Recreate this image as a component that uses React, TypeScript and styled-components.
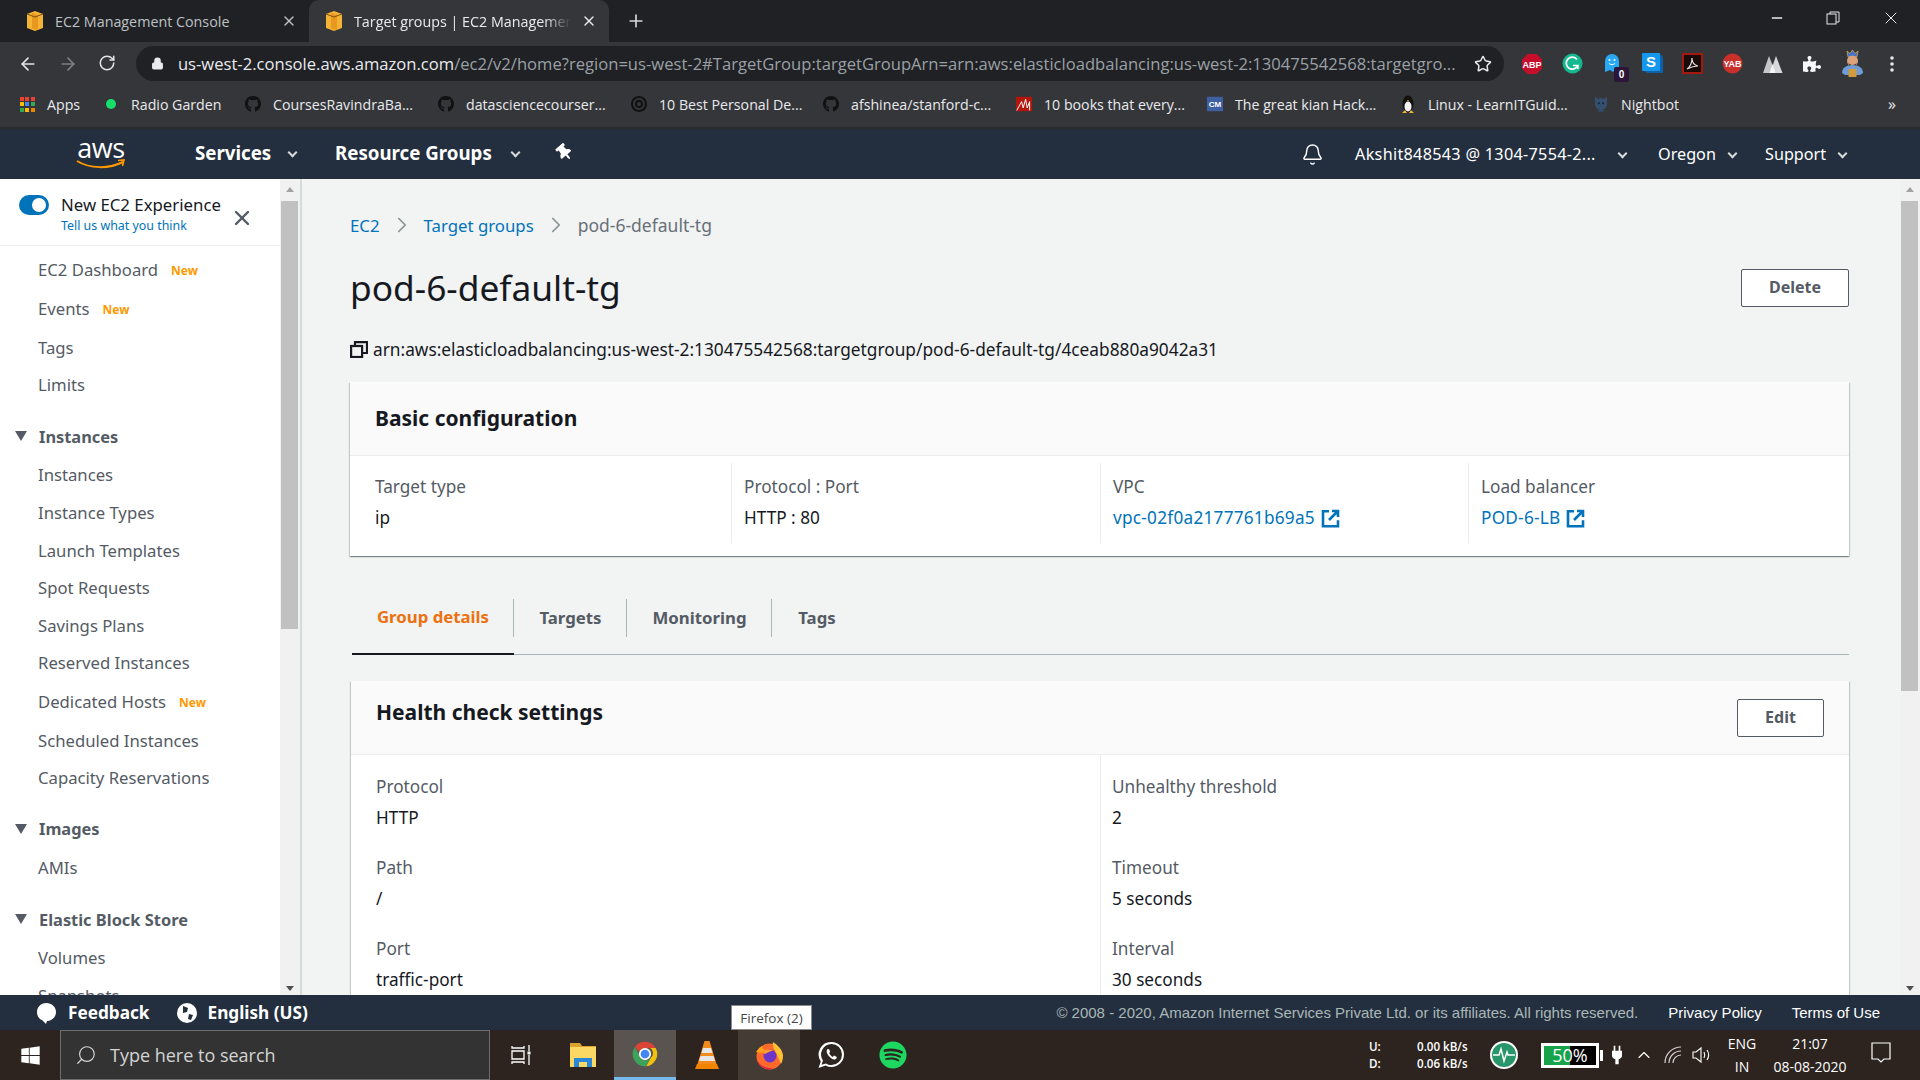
import React from 'react';
import styled, { createGlobalStyle } from 'styled-components';
import { ArrowLeft, ArrowRight, RotateCw, Lock, Star, Bell, X, Plus, Minus, Search, ChevronRight, ChevronUp } from 'lucide-react';
import { FaGithub, FaPuzzlePiece, FaSpotify, FaThumbtack, FaWindows, FaBullseye } from 'react-icons/fa';

const Global = createGlobalStyle`
  html, body { margin: 0; padding: 0; background: #202124; }
  * { box-sizing: border-box; }
`;

const Page = styled.div`
  width: 1920px;
  height: 1080px;
  display: flex;
  flex-direction: column;
  overflow: hidden;
  position: relative;
  font-family: "Noto Sans", "Open Sans", sans-serif;
  color: #16191f;
`;

/* ---- browser chrome ---- */
const TabStrip = styled.div`
  height: 42px;
  background: #202124;
  display: flex;
  align-items: flex-end;
  font-family: "Open Sans", sans-serif;
  font-size: 14.3px;
`;
const Tab = styled.div<{ $active?: boolean; $w: number }>`
  width: ${p => p.$w}px;
  height: 42px;
  padding: 0 12px 0 25px;
  display: flex;
  align-items: center;
  gap: 10px;
  border-radius: 10px 10px 0 0;
  background: ${p => (p.$active ? '#35363a' : 'transparent')};
  color: ${p => (p.$active ? '#e8eaed' : '#bdc1c6')};
`;
const TabActivePad = styled(Tab)`
  padding-left: 15px;
`;
const TabTitle = styled.span<{ $fade?: boolean }>`
  flex: 1;
  overflow: hidden;
  white-space: nowrap;
  ${p => (p.$fade ? 'mask-image: linear-gradient(90deg, #000 88%, transparent 100%);' : '')}
`;
const NewTab = styled.div`
  margin-left: 17px;
  height: 42px;
  display: flex;
  align-items: center;
  color: #d5d7da;
`;
const WindowControls = styled.div`
  margin-left: auto;
  height: 42px;
  display: flex;
  align-items: center;
  gap: 41px;
  padding: 0 19px 6px 0;
  color: #e8eaed;
`;
const Toolbar = styled.div`
  height: 43px;
  background: #35363a;
  display: flex;
  align-items: center;
  padding: 0 8px 0 18px;
`;
const NavButtons = styled.div`
  width: 118px;
  display: flex;
  gap: 20px;
  color: #e3e5e8;
`;
const Omnibox = styled.div`
  width: 1369px;
  height: 35px;
  border-radius: 18px;
  background: #202124;
  display: flex;
  align-items: center;
  padding: 0 12px 0 15px;
  font-family: "Open Sans", sans-serif;
  font-size: 16.6px;
  color: #9aa0a6;
  gap: 14px;
`;
const Url = styled.div`
  flex: 1;
  white-space: nowrap;
  overflow: hidden;
  b { font-weight: 400; color: #e8eaed; }
`;
const Extensions = styled.div`
  flex: 1;
  display: flex;
  align-items: center;
  padding-left: 8px;
`;
const Ext = styled.div`
  width: 40px;
  height: 30px;
  display: flex;
  align-items: center;
  justify-content: center;
  position: relative;
`;
const ExtBadge = styled.span`
  position: absolute;
  right: 3px;
  bottom: -3px;
  width: 15px;
  height: 15px;
  border-radius: 2px;
  background: #2c1538;
  color: #fff;
  font: bold 10px/15px "Liberation Sans", sans-serif;
  text-align: center;
`;
const Bookmarks = styled.div`
  height: 42px;
  background: #35363a;
  padding-bottom: 4px;
  display: flex;
  align-items: center;
  font-family: "Open Sans", sans-serif;
  font-size: 14.2px;
  color: #e8eaed;
  position: relative;
`;
const Bookmark = styled.div<{ $w: number }>`
  width: ${p => p.$w}px;
  display: flex;
  align-items: center;
  gap: 12px;
  white-space: nowrap;
`;
const BookmarkIcon = styled.span`
  width: 16px;
  height: 18px;
  display: flex;
  align-items: center;
  justify-content: center;
  flex: none;
`;
const MoreMarks = styled.span`
  margin-left: auto;
  margin-right: 24px;
  font-size: 16px;
`;
const AppsGrid = styled.span`
  width: 15px;
  height: 15px;
  display: grid;
  grid-template-columns: repeat(3, 4px);
  grid-auto-rows: 4px;
  gap: 1.500px;
`;
const AppsDot = styled.i<{ $c: string }>`
  background: ${p => p.$c};
`;
const GreenDot = styled.span`
  width: 10px;
  height: 10px;
  border-radius: 50%;
  background: #16e06a;
`;
const ChromeEdge = styled.div`
  height: 2px;
  background: #2a2b2e;
`;

/* ---- aws console nav ---- */
const ConsoleNav = styled.div`
  height: 50px;
  background: #232f3e;
  display: flex;
  align-items: center;
  color: #fff;
  font-family: "Noto Sans", sans-serif;
`;
const Logo = styled.div`
  width: 50px;
  margin-left: 76px;
  height: 34px;
  display: flex;
  flex-direction: column;
  align-items: center;
  position: relative;
  font: 400 27px/22px "Open Sans", sans-serif;
  letter-spacing: -0.4px;
  svg { position: absolute; left: 0; bottom: 1px; }
`;
const NavMain = styled.div<{ $ml: number; $w: number }>`
  margin-left: ${p => p.$ml}px;
  width: ${p => p.$w}px;
  height: 26px;
  margin-top: -3px;
  font-size: 18.7px;
  font-weight: 700;
  display: flex;
  align-items: center;
  justify-content: space-between;
  white-space: nowrap;
`;
const PinIcon = styled(FaThumbtack)`
  transform: rotate(-40deg);
`;
const Caret = styled.i`
  display: inline-block;
  width: 8px;
  height: 8px;
  position: relative;
  flex: none;
  &::before {
    content: '';
    position: absolute;
    left: 1px;
    top: 0;
    width: 5px;
    height: 5px;
    border-right: 2px solid #d5dbdb;
    border-bottom: 2px solid #d5dbdb;
    transform: rotate(45deg);
  }
`;
const NavRight = styled.div`
  margin-left: auto;
  display: flex;
  align-items: center;
  font-size: 16.2px;
  padding-right: 74px;
`;
const NavItem = styled.div<{ $w: number; $ml: number }>`
  width: ${p => p.$w}px;
  margin-left: ${p => p.$ml}px;
  display: flex;
  align-items: center;
  justify-content: space-between;
  white-space: nowrap;
`;
const NavUser = styled(NavItem)`
  letter-spacing: 0.3px;
`;

/* ---- page body ---- */
const Main = styled.div`
  flex: 1;
  min-height: 0;
  display: flex;
  background: #f2f3f3;
`;
const Sidebar = styled.aside`
  width: 280px;
  background: #fff;
  overflow: hidden;
  flex: none;
`;
const Experience = styled.div`
  height: 67px;
  border-bottom: 1px solid #eaeded;
  display: flex;
  padding: 15px 0 0 19px;
`;
const Toggle = styled.div`
  width: 30px;
  height: 20px;
  border-radius: 10px;
  background: #0073bb;
  flex: none;
  margin-top: 1px;
  display: flex;
  justify-content: flex-end;
  padding: 3px;
  &::after {
    content: '';
    width: 14px;
    height: 14px;
    border-radius: 50%;
    background: #fff;
  }
`;
const ExpText = styled.div`
  margin-left: 12px;
  width: 169px;
  font-size: 16.8px;
  line-height: 22px;
  white-space: nowrap;
`;
const ExpLink = styled.div`
  font-size: 12.4px;
  line-height: 19px;
  color: #0073bb;
`;
const ExpClose = styled.div`
  color: #545b64;
  margin-top: 12px;
`;
const NavList = styled.div`
  padding-top: 3.500px;
`;
const NavRow = styled.div<{ $isNew?: boolean }>`
  height: ${p => (p.$isNew ? 39.5 : 37.6)}px;
  padding-left: 38px;
  display: flex;
  align-items: center;
  font-size: 16.7px;
  color: #545b64;
  white-space: nowrap;
`;
const NewTag = styled.span`
  margin-left: 13px;
  font-size: 12px;
  font-weight: 700;
  color: #ff9900;
  padding-top: 2px;
`;
const SectionHead = styled.div`
  margin: 14px 0 1.500px;
  height: 37px;
  padding-left: 15px;
  display: flex;
  align-items: center;
  gap: 12px;
  font-size: 16.4px;
  font-weight: 700;
  color: #545b64;
  &::before {
    content: '';
    border-left: 6.5px solid transparent;
    border-right: 6.5px solid transparent;
    border-top: 10px solid #545b64;
  }
`;
const Scrollbar = styled.div<{ $line?: boolean }>`
  width: ${p => (p.$line ? 22 : 20)}px;
  flex: none;
  display: flex;
  flex-direction: column;
  align-items: flex-start;
  background: #f1f1f1;
  border-right: ${p => (p.$line ? '2px solid #d5dbdb' : '0')};
  padding: 0 2px 0 1px;
`;
const ScrollThumb = styled.div<{ $h: number }>`
  width: 17px;
  height: ${p => p.$h}px;
  background: #c1c1c1;
`;
const ScrollGap = styled.div`
  flex: 1;
`;
const ScrollArrow = styled.div<{ $up?: boolean }>`
  width: 17px;
  height: 22px;
  display: flex;
  justify-content: center;
  align-items: ${p => (p.$up ? 'flex-start' : 'flex-end')};
  padding: 8px 0 4px;
  &::before {
    content: '';
    border-left: 4px solid transparent;
    border-right: 4px solid transparent;
    ${p => (p.$up ? 'border-bottom: 5px solid #a3a3a3;' : 'border-top: 5px solid #505050;')}
  }
`;
const Content = styled.main`
  flex: 1;
  min-width: 0;
  overflow: hidden;
  padding: 35px 51px 0 48px;
  font-size: 17.2px;
`;
const Crumbs = styled.nav`
  height: 22px;
  display: flex;
  align-items: center;
  font-size: 17.5px;
  color: #687078;
`;
const CrumbSep = styled.span`
  width: 44px;
  display: flex;
  justify-content: center;
  color: #879596;
`;
const CrumbLink = styled.span`
  color: #0073bb;
  font-size: 16.8px;
`;
const A = styled.span`
  color: #0073bb;
  letter-spacing: 0.25px;
`;
const TitleRow = styled.div`
  margin-top: 33px;
  height: 38px;
  display: flex;
  align-items: center;
  justify-content: space-between;
`;
const Title = styled.h1`
  margin: -2px 0 0;
  font-size: 35.3px;
  font-weight: 400;
  line-height: 38px;
`;
const Btn = styled.button<{ $w: number }>`
  width: ${p => p.$w}px;
  height: 38px;
  padding: 0 0 2px;
  background: #fff;
  border: 1px solid #545b64;
  border-radius: 2px;
  font: 700 16px "Noto Sans", sans-serif;
  color: #545b64;
`;
const Arn = styled.div`
  margin-top: 30px;
  height: 24px;
  display: flex;
  align-items: center;
  gap: 5px;
  font-size: 17.3px;
  white-space: nowrap;
`;
const Card = styled.section<{ $mt: number }>`
  margin-top: ${p => p.$mt}px;
  background: #fff;
  box-shadow: 0 1px 1px 0 rgba(0, 28, 36, 0.3), 1px 1px 1px 0 rgba(0, 28, 36, 0.15), -1px 1px 1px 0 rgba(0, 28, 36, 0.15);
`;
const CardHead = styled.header`
  height: 74px;
  background: #fafafa;
  border-bottom: 1px solid #eaeded;
  display: flex;
  align-items: center;
  justify-content: space-between;
  padding: 0 25px;
`;
const CardTitle = styled.h2<{ $raised?: boolean }>`
  margin: ${p => (p.$raised ? '-12px 0 0' : '-2px 0 0')};
  font-size: 21px;
  font-weight: 700;
  line-height: 28px;
`;
const ConfigGrid = styled.div`
  display: grid;
  grid-template-columns: 381px 369px 368px 1fr;
  padding: 7px 0 13px;
`;
const ConfigCell = styled.div<{ $first?: boolean }>`
  height: 80px;
  padding: 12px 0 0 ${p => (p.$first ? 25 : 12)}px;
  border-left: ${p => (p.$first ? '0' : '1px solid #eaeded')};
`;
const Label = styled.div`
  line-height: 24px;
  color: #545b64;
`;
const Value = styled.div`
  margin-top: 7px;
  line-height: 24px;
  display: flex;
  align-items: center;
  gap: 6px;
`;
const TabBar = styled.div`
  margin-top: 28px;
  height: 71px;
  margin-left: 2px;
  border-bottom: 1px solid #aab7b8;
  display: flex;
  align-items: center;
`;
const DetailTab = styled.div<{ $active?: boolean; $w: number; $sep?: boolean }>`
  width: ${p => p.$w}px;
  height: 71px;
  padding-bottom: 3px;
  display: flex;
  align-items: center;
  justify-content: center;
  font-size: 16.8px;
  font-weight: 700;
  color: ${p => (p.$active ? '#ec7211' : '#545b64')};
  border-bottom: ${p => (p.$active ? '2px solid #16191f' : '0')};
  position: relative;
  &::after {
    content: '';
    display: ${p => (p.$sep ? 'block' : 'none')};
    position: absolute;
    right: 0;
    top: 15px;
    height: 38px;
    width: 1px;
    background: #aab7b8;
  }
`;
const HealthCard = styled(Card)`
  margin-left: 1px;
`;
const HealthGrid = styled.div`
  display: grid;
  grid-template-columns: 1fr 1fr;
`;
const HealthCol = styled.div<{ $second?: boolean }>`
  padding: 20px 0 0 ${p => (p.$second ? 11 : 25)}px;
  border-left: ${p => (p.$second ? '1px solid #eaeded' : '0')};
`;
const HealthItem = styled.div`
  margin-bottom: 26px;
`;

/* ---- footer + taskbar ---- */
const Footer = styled.footer`
  height: 35px;
  background: #232f3e;
  display: flex;
  align-items: center;
  padding: 0 40px 0 34px;
  color: #fff;
  font-family: "Liberation Sans", sans-serif;
  font-size: 15px;
`;
const FootBold = styled.span`
  display: flex;
  align-items: center;
  gap: 10px;
  font: 700 17.2px "Noto Sans", sans-serif;
  margin-right: 26px;
`;
const FootNote = styled.span`
  margin-left: auto;
  color: #aab7b8;
`;
const FootLink = styled.span`
  margin-left: 30px;
`;
const Tooltip = styled.div`
  position: absolute;
  left: 731px;
  top: 1005px;
  width: 81px;
  height: 25px;
  background: #fff;
  border: 1px solid #8a8a8a;
  display: flex;
  align-items: center;
  justify-content: center;
  font: 13.5px "Open Sans", sans-serif;
  color: #444;
`;
const Taskbar = styled.div`
  height: 50px;
  background: #2d241f;
  display: flex;
  align-items: center;
  color: #fff;
  font-family: "Open Sans", sans-serif;
`;
const StartBtn = styled.div`
  width: 60px;
  display: flex;
  justify-content: center;
`;
const SearchBox = styled.div`
  width: 430px;
  height: 50px;
  background: #333;
  border: 1px solid #6d6d6d;
  display: flex;
  align-items: center;
  padding-left: 14px;
  gap: 13px;
  font-size: 18px;
  color: #d4d4d4;
`;
const SearchGlyph = styled(Search)`
  transform: scaleX(-1);
`;
const TaskIcons = styled.div`
  display: flex;
`;
const TaskIcon = styled.div<{ $state?: 'active' | 'open' }>`
  width: 62px;
  height: 50px;
  display: flex;
  align-items: center;
  justify-content: center;
  background: ${p => (p.$state === 'active' ? '#5a5450' : p.$state === 'open' ? '#443b35' : 'transparent')};
  border-bottom: ${p => (p.$state === 'active' ? '3px solid #76b9ed' : '0')};
`;
const Tray = styled.div`
  margin-left: auto;
  display: flex;
  align-items: center;
  height: 50px;
  padding-right: 29px;
`;
const NetSpeed = styled.div`
  width: 120px;
  font-size: 11.600px;
  line-height: 17px;
  display: grid;
  grid-template-columns: 48px 1fr;
  font-weight: 600;
`;
const BatteryBox = styled.div`
  margin-left: 22px;
  width: 58px;
  height: 25px;
  border: 3px solid #fff;
  background: linear-gradient(90deg, #16a34a 50%, #000 50%);
  font-size: 18px;
  line-height: 19px;
  text-align: center;
  position: relative;
  &::after {
    content: '';
    position: absolute;
    right: -7px;
    top: 4px;
    width: 3px;
    height: 11px;
    background: #fff;
  }
`;
const TrayIcon = styled.div<{ $w: number }>`
  width: ${p => p.$w}px;
  display: flex;
  justify-content: center;
  color: #fff;
`;
const Clock = styled.div`
  margin-left: 8px;
  display: grid;
  grid-template-columns: 44px 80px;
  column-gap: 6px;
  font-size: 14px;
  line-height: 23px;
  text-align: center;
`;
const Notify = styled.div`
  margin-left: 21px;
`;

const BoxIcon = () => (
  <svg width="20" height="22" viewBox="0 0 20 22">
    <path d="M10 1l8 3v14l-8 3-8-3V4z" fill="#f5b335" />
    <path d="M7 3l6 2v15l-6-1.500z" fill="#e8971f" />
    <path d="M2 4l8 3 8-3" fill="none" stroke="#7c5210" strokeWidth="1" />
  </svg>
);
const GitHub = () => <FaGithub size={18} color="#111" />;
const ExternalIcon = () => (
  <svg width="19" height="19" viewBox="0 0 19 19" fill="none" stroke="#0073bb" strokeWidth="2.600">
    <path d="M8 2.200H2v15h15v-6" />
    <path d="M11 2h6v6M16.500 2.500L8 11" />
  </svg>
);
const CopyIcon = () => (
  <svg width="18" height="17" viewBox="0 0 18 17" fill="none" stroke="#16191f" strokeWidth="2.200">
    <rect x="1.100" y="5" width="11" height="11" />
    <path d="M5 5V1.100h12V12h-5" />
  </svg>
);
const TuxIcon = () => (
  <svg width="16" height="19" viewBox="0 0 16 19">
    <ellipse cx="8" cy="9" rx="5.500" ry="8.500" fill="#111" />
    <ellipse cx="8" cy="11.500" rx="3.500" ry="5" fill="#f4f4f4" />
    <path d="M2 18l3-3 2 3zM14 18l-3-3-2 3z" fill="#f2b632" />
    <path d="M7 5h2l-1 1.500z" fill="#f2b632" />
  </svg>
);
const CmIcon = () => (
  <svg width="20" height="18" viewBox="0 0 20 18">
    <rect width="20" height="18" fill="#3f5fa3" />
    <text x="10" y="13" textAnchor="middle" fontFamily="Liberation Sans" fontWeight="700" fontSize="10" fill="#fff">CM</text>
  </svg>
);
const NightbotIcon = () => (
  <svg width="19" height="20" viewBox="0 0 19 20">
    <path d="M3 1l2.500 3.500h8L16 1l.5 9a7 6.500 0 0 1-14 0z" fill="#3c5678" />
    <circle cx="9.500" cy="10" r="7" fill="#34506f" />
    <circle cx="7" cy="9" r="1.300" fill="#1c2c40" />
    <circle cx="12" cy="9" r="1.300" fill="#1c2c40" />
    <path d="M6 17h7v2H6z" fill="#34506f" />
  </svg>
);
function AppsIcon() {
  const colors = ['#ea4335', '#ea4335', '#ea4335', '#fbbc05', '#4285f4', '#34a853', '#34a853', '#fbbc05', '#ea8600'];
  return <AppsGrid>{colors.map((c, i) => <AppsDot key={i} $c={c} />)}</AppsGrid>;
}

const bookmarks = [
  { w: 142, icon: <GreenDot />, label: 'Radio Garden' },
  { w: 193, icon: <GitHub />, label: 'CoursesRavindraBa...' },
  { w: 193, icon: <GitHub />, label: 'datasciencecourser...' },
  { w: 192, icon: <FaBullseye size={18} color="#111" />, label: '10 Best Personal De...' },
  { w: 193, icon: <GitHub />, label: 'afshinea/stanford-c...' },
  { w: 191, icon: <svg width="20" height="18" viewBox="0 0 20 18"><rect width="20" height="18" fill="#b3160c" /><path d="M1 17L7 6l2 8 3-11 2 11 3-8v11" fill="none" stroke="#fff" strokeWidth="1.200" /></svg>, label: '10 books that every...' },
  { w: 193, icon: <CmIcon />, label: 'The great kian Hack...' },
  { w: 193, icon: <TuxIcon />, label: 'Linux - LearnITGuid...' },
  { w: 90, icon: <NightbotIcon />, label: 'Nightbot' },
];

const sidebar: Array<{ head?: string; label?: string; isNew?: boolean }> = [
  { label: 'EC2 Dashboard', isNew: true },
  { label: 'Events', isNew: true },
  { label: 'Tags' },
  { label: 'Limits' },
  { head: 'Instances' },
  { label: 'Instances' },
  { label: 'Instance Types' },
  { label: 'Launch Templates' },
  { label: 'Spot Requests' },
  { label: 'Savings Plans' },
  { label: 'Reserved Instances' },
  { label: 'Dedicated Hosts', isNew: true },
  { label: 'Scheduled Instances' },
  { label: 'Capacity Reservations' },
  { head: 'Images' },
  { label: 'AMIs' },
  { head: 'Elastic Block Store' },
  { label: 'Volumes' },
  { label: 'Snapshots' },
];

const healthLeft = [['Protocol', 'HTTP'], ['Path', '/'], ['Port', 'traffic-port']];
const healthRight = [['Unhealthy threshold', '2'], ['Timeout', '5 seconds'], ['Interval', '30 seconds']];

export default function App() {
  return (
    <Page>
      <Global />
      <TabStrip>
        <Tab $w={309}>
          <BoxIcon />
          <TabTitle>EC2 Management Console</TabTitle>
          <X size={16} />
        </Tab>
        <TabActivePad $active $w={300}>
          <BoxIcon />
          <TabTitle $fade>Target groups | EC2 Management Console</TabTitle>
          <X size={16} />
        </TabActivePad>
        <NewTab><Plus size={20} /></NewTab>
        <WindowControls>
          <Minus size={16} />
          <svg width="14" height="14" viewBox="0 0 14 14" fill="none" stroke="#e8eaed"><rect x="1" y="3" width="9" height="10" /><path d="M4 3V1h9v10h-3" /></svg>
          <X size={20} strokeWidth={1.2} />
        </WindowControls>
      </TabStrip>
      <Toolbar>
        <NavButtons>
          <ArrowLeft size={20} />
          <ArrowRight size={20} color="#7c7f84" />
          <RotateCw size={18} />
        </NavButtons>
        <Omnibox>
          <Lock size={13} color="#e8eaed" fill="#e8eaed" />
          <Url><b>us-west-2.console.aws.amazon.com</b>/ec2/v2/home?region=us-west-2#TargetGroup:targetGroupArn=arn:aws:elasticloadbalancing:us-west-2:130475542568:targetgro...</Url>
          <Star size={18} color="#e8eaed" />
        </Omnibox>
        <Extensions>
          <Ext>
            <svg width="22" height="22" viewBox="0 0 22 22"><path d="M6.500 1h9L21 6.500v9L15.500 21h-9L1 15.500v-9z" fill="#c70d2c" /><text x="11" y="14.500" textAnchor="middle" fontFamily="Liberation Sans" fontWeight="700" fontSize="9" fill="#fff">ABP</text></svg>
          </Ext>
          <Ext>
            <svg width="21" height="21" viewBox="0 0 21 21"><circle cx="10.500" cy="10.500" r="10" fill="#15b88f" /><path d="M15 6.500a6 6 0 1 0 .8 6H11M15.800 16v-4" fill="none" stroke="#fff" strokeWidth="1.700" /></svg>
          </Ext>
          <Ext>
            <svg width="16" height="22" viewBox="0 0 16 22"><path d="M1 8a7 7 0 0 1 14 0v9l-3-1-3 3-3-2-5 2z" fill="#29a9f2" /><circle cx="5.500" cy="7" r="1" fill="#fff" /><circle cx="10.500" cy="7" r="1" fill="#fff" /><path d="M5 10.500c2 1.500 4 1.500 6 0" stroke="#fff" fill="none" /></svg>
            <ExtBadge>0</ExtBadge>
          </Ext>
          <Ext>
            <svg width="21" height="21" viewBox="0 0 21 21"><path d="M2 1h16l3 3v16H5l-3-2z" fill="#0b62a8" /><rect y="0" width="18" height="18" rx="1" fill="#1597ee" /><text x="9" y="14" textAnchor="middle" fontFamily="Liberation Sans" fontWeight="700" fontSize="15" fill="#fff">S</text></svg>
          </Ext>
          <Ext>
            <svg width="21" height="21" viewBox="0 0 21 21"><rect x="1" y="1" width="19" height="19" fill="#1a0a08" stroke="#a3190f" strokeWidth="2" /><path d="M5 16c3-2 5-6 5-11 0 4 2 7 6 8-4 0-7 1-11 3z" fill="none" stroke="#ddd" strokeWidth="1.200" /></svg>
          </Ext>
          <Ext>
            <svg width="21" height="21" viewBox="0 0 21 21"><circle cx="10.500" cy="10.500" r="10" fill="#c9302c" /><text x="10.500" y="14" textAnchor="middle" fontFamily="Liberation Sans" fontWeight="700" fontSize="9" fill="#fff">YAB</text></svg>
          </Ext>
          <Ext>
            <svg width="21" height="18" viewBox="0 0 21 18"><path d="M7 1l6.500 17H1z" fill="#c4c6c8" /><path d="M14 1l6.500 17H8z" fill="#d6d8da" /><path d="M10.500 9l3 9h-6z" fill="#f6f6f6" /></svg>
          </Ext>
          <Ext><FaPuzzlePiece size={18} color="#f6f7f8" /></Ext>
          <Ext>
            <svg width="25" height="29" viewBox="0 0 25 29"><path d="M8 8l-1-6 3 2.500L12.500 1 15 4.500 18 2l-1 6z" fill="#3f6fd1" stroke="#e3b341" strokeWidth=".7" /><circle cx="12.500" cy="12" r="5.500" fill="#dca37c" /><path d="M8 13c1 4 8 4 9 0l-1.500 4h-6z" fill="#3a2416" /><path d="M2 24c0-5 4-8 10.500-8S23 19 23 24l-3 2H5z" fill="#6f9bd6" /><rect x="8.500" y="20" width="8" height="8" fill="#d19a3d" /></svg>
          </Ext>
          <Ext>
            <svg width="4" height="18" viewBox="0 0 4 18" fill="#e8eaed"><circle cx="2" cy="3" r="1.800" /><circle cx="2" cy="9" r="1.800" /><circle cx="2" cy="15" r="1.800" /></svg>
          </Ext>
        </Extensions>
      </Toolbar>
      <Bookmarks>
        <Bookmark $w={19} />
        <Bookmark $w={76}><BookmarkIcon><AppsIcon /></BookmarkIcon>Apps</Bookmark>
        <Bookmark $w={8} />
        {bookmarks.map(b => (
          <Bookmark key={b.label} $w={b.w}><BookmarkIcon>{b.icon}</BookmarkIcon>{b.label}</Bookmark>
        ))}
        <MoreMarks>»</MoreMarks>
      </Bookmarks>
      <ChromeEdge />
      <ConsoleNav>
        <Logo>
          aws
          <svg width="50" height="11" viewBox="0 0 50 11" fill="none" stroke="#ff9900">
            <path d="M1 2c13 8 32 8 46 1" strokeWidth="2" />
            <path d="M42 1.500l6-.5-1.500 6" strokeWidth="1.600" />
          </svg>
        </Logo>
        <NavMain $ml={69} $w={101}>Services<Caret /></NavMain>
        <NavMain $ml={39} $w={184}>Resource Groups<Caret /></NavMain>
        <NavMain $ml={37} $w={18}><PinIcon size={17} /></NavMain>
        <NavRight>
          <Bell size={23} strokeWidth={1.5} />
          <NavUser $ml={31} $w={271}>Akshit848543 @ 1304-7554-2...<Caret /></NavUser>
          <NavItem $ml={32} $w={78}>Oregon<Caret /></NavItem>
          <NavItem $ml={29} $w={81}>Support<Caret /></NavItem>
        </NavRight>
      </ConsoleNav>
      <Main>
        <Sidebar>
          <Experience>
            <Toggle />
            <ExpText>
              New EC2 Experience
              <ExpLink>Tell us what you think</ExpLink>
            </ExpText>
            <ExpClose><X size={24} strokeWidth={2.4} /></ExpClose>
          </Experience>
          <NavList>
            {sidebar.map((s, i) => s.head
              ? <SectionHead key={i}>{s.head}</SectionHead>
              : <NavRow key={i} $isNew={s.isNew}>{s.label}{s.isNew && <NewTag>New</NewTag>}</NavRow>)}
          </NavList>
        </Sidebar>
        <Scrollbar $line>
          <ScrollArrow $up />
          <ScrollThumb $h={428} />
          <ScrollGap />
          <ScrollArrow />
        </Scrollbar>
        <Content>
          <Crumbs>
            <CrumbLink>EC2</CrumbLink>
            <CrumbSep><ChevronRight size={26} strokeWidth={1.6} /></CrumbSep>
            <CrumbLink>Target groups</CrumbLink>
            <CrumbSep><ChevronRight size={26} strokeWidth={1.6} /></CrumbSep>
            pod-6-default-tg
          </Crumbs>
          <TitleRow>
            <Title>pod-6-default-tg</Title>
            <Btn $w={108}>Delete</Btn>
          </TitleRow>
          <Arn><CopyIcon />arn:aws:elasticloadbalancing:us-west-2:130475542568:targetgroup/pod-6-default-tg/4ceab880a9042a31</Arn>
          <Card $mt={21}>
            <CardHead><CardTitle>Basic configuration</CardTitle></CardHead>
            <ConfigGrid>
              <ConfigCell $first><Label>Target type</Label><Value>ip</Value></ConfigCell>
              <ConfigCell><Label>Protocol : Port</Label><Value>HTTP : 80</Value></ConfigCell>
              <ConfigCell><Label>VPC</Label><Value><A>vpc-02f0a2177761b69a5</A><ExternalIcon /></Value></ConfigCell>
              <ConfigCell><Label>Load balancer</Label><Value><A>POD-6-LB</A><ExternalIcon /></Value></ConfigCell>
            </ConfigGrid>
          </Card>
          <TabBar>
            <DetailTab $active $sep $w={162}>Group details</DetailTab>
            <DetailTab $w={113} $sep>Targets</DetailTab>
            <DetailTab $w={145} $sep>Monitoring</DetailTab>
            <DetailTab $w={90}>Tags</DetailTab>
          </TabBar>
          <HealthCard $mt={26}>
            <CardHead>
              <CardTitle $raised>Health check settings</CardTitle>
              <Btn $w={87}>Edit</Btn>
            </CardHead>
            <HealthGrid>
              <HealthCol>
                {healthLeft.map(([l, v]) => <HealthItem key={l}><Label>{l}</Label><Value>{v}</Value></HealthItem>)}
              </HealthCol>
              <HealthCol $second>
                {healthRight.map(([l, v]) => <HealthItem key={l}><Label>{l}</Label><Value>{v}</Value></HealthItem>)}
              </HealthCol>
            </HealthGrid>
          </HealthCard>
        </Content>
        <Scrollbar>
          <ScrollArrow $up />
          <ScrollThumb $h={490} />
          <ScrollGap />
          <ScrollArrow />
        </Scrollbar>
      </Main>
      <Footer>
        <FootBold>
          <svg width="24" height="24" viewBox="0 0 24 24" fill="#fff"><path d="M12 2c6 0 10 4 10 9s-4 9-9 9l-1 3-4-4c-3-1-5-4-5-8 0-5 4-9 9-9z" /></svg>
          Feedback
        </FootBold>
        <FootBold>
          <svg width="22" height="22" viewBox="0 0 22 22"><circle cx="11" cy="11" r="10" fill="#fff" /><path d="M7 4l5 2-1 4-4 1zM13 12l4 1-2 5-3-1z" fill="#232f3e" /></svg>
          English (US)
        </FootBold>
        <FootNote>© 2008 - 2020, Amazon Internet Services Private Ltd. or its affiliates. All rights reserved.</FootNote>
        <FootLink>Privacy Policy</FootLink>
        <FootLink>Terms of Use</FootLink>
      </Footer>
      <Taskbar>
        <StartBtn><FaWindows size={21} /></StartBtn>
        <SearchBox>
          <SearchGlyph size={22} strokeWidth={1.3} />
          Type here to search
        </SearchBox>
        <TaskIcons>
          <TaskIcon>
            <svg width="22" height="22" viewBox="0 0 22 22" fill="none" stroke="#fff" strokeWidth="1.300">
              <path d="M2 2v2h12V2M2 20v-2h12v2M2 7h12v8H2zM19 1v6M19 11v10" />
              <rect x="17.500" y="7.500" width="3" height="3" fill="#fff" stroke="none" />
            </svg>
          </TaskIcon>
          <TaskIcon>
            <svg width="28" height="24" viewBox="0 0 28 24">
              <path d="M1 0h10l2 3h14v21H1z" fill="#dba42c" />
              <rect x="1" y="4" width="26" height="20" fill="#fbd764" />
              <path d="M5 24v-9h18v9h-5v-5h-8v5z" fill="#2b88d8" />
            </svg>
          </TaskIcon>
          <TaskIcon $state="active">
            <svg width="28" height="28" viewBox="0 0 48 48">
              <path d="M24 3a21 21 0 0 1 18.200 10.500H24a10.500 10.500 0 0 0-9.900 7L6.700 12A21 21 0 0 1 24 3z" fill="#db4437" />
              <path d="M42.200 13.500A21 21 0 0 1 26 44.900l8-14.400a10.500 10.500 0 0 0-1-17z" fill="#f4c20d" />
              <path d="M26 44.900A21 21 0 0 1 6.700 12l8.600 15.700a10.500 10.500 0 0 0 18.700 2.800z" fill="#3da35a" />
              <circle cx="24" cy="24" r="9" fill="#4285f4" stroke="#fff" strokeWidth="3" />
            </svg>
          </TaskIcon>
          <TaskIcon>
            <svg width="26" height="30" viewBox="0 0 26 30">
              <path d="M10.500 1h5l7 23H3.500z" fill="#f38b1c" />
              <path d="M9 8h8l1.500 5h-11zM6.500 16h13l1.500 5H5z" fill="#e6e6e6" />
              <path d="M3 24h20l2 5H1z" fill="#f08300" />
            </svg>
          </TaskIcon>
          <TaskIcon $state="open">
            <svg width="29" height="29" viewBox="0 0 29 29">
              <circle cx="14.500" cy="15.500" r="13" fill="#ff6a2b" />
              <path d="M18 1c3 2 10 7 10 14 0 3-1 6-2 8l-4-9c-1-4-5-7-4-13z" fill="#ffc032" />
              <path d="M1 11c2-3 4-5 6-6 0 2 1 3 3 4l-4 3z" fill="#ffa31a" />
              <circle cx="15" cy="15" r="6.500" fill="#6d35c9" />
              <path d="M7 11c3-3 8-3 11-1-4 0-5 2-8 3z" fill="#ff9a2b" />
              <path d="M2 19c3 6 10 9 17 8-6 3-15 0-17-8z" fill="#e5194f" />
            </svg>
          </TaskIcon>
          <TaskIcon>
            <svg width="28" height="28" viewBox="0 0 28 28">
              <path d="M14.500 1a12.500 12.500 0 0 1 0 25c-2 0-4-.5-6-1.500L1.500 27l2.300-6.500A12.500 12.500 0 0 1 14.500 1z" fill="#fff" />
              <path d="M14.500 3a10.500 10.500 0 0 1 0 21c-2 0-3.800-.5-5.500-1.500l-4.500 1.300 1.500-4.300A10.500 10.500 0 0 1 14.500 3z" fill="#2e2621" />
              <path d="M10.500 8c-1 1-1.500 3 .5 6s5 5 7 4.500c1.200-.3 2-1.500 1.800-2.500l-2.800-1.400-1.200 1.300c-1.600-.6-3-2.200-3.700-3.800l1.100-1.100-1.100-2.800z" fill="#fff" />
            </svg>
          </TaskIcon>
          <TaskIcon><FaSpotify size={28} color="#1ed760" /></TaskIcon>
        </TaskIcons>
        <Tray>
          <NetSpeed>
            <span>U:</span><span>0.00 kB/s</span>
            <span>D:</span><span>0.06 kB/s</span>
          </NetSpeed>
          <svg width="30" height="30" viewBox="0 0 30 30"><circle cx="15" cy="15" r="14" fill="#fff" /><circle cx="15" cy="15" r="12" fill="#27966a" /><path d="M4 15h6l2-6 3 12 3-9 1 3h7" fill="none" stroke="#fff" strokeWidth="1.500" /></svg>
          <BatteryBox>50%</BatteryBox>
          <TrayIcon $w={35}>
            <svg width="10" height="22" viewBox="0 0 12 24" fill="#fff"><path d="M2 1h2v6h4V1h2v6h2v6c0 2-2 4-4 4v6H4v-6c-2 0-4-2-4-4V7h2z" /></svg>
          </TrayIcon>
          <TrayIcon $w={20}><ChevronUp size={22} strokeWidth={1.4} /></TrayIcon>
          <TrayIcon $w={38}>
            <svg width="18" height="18" viewBox="0 0 18 18" fill="none" stroke="#fff" strokeWidth="1.200"><path d="M1 17a16 16 0 0 1 16-16M5 17A12 12 0 0 1 17 5M9 17a8 8 0 0 1 8-8" opacity=".8" /></svg>
          </TrayIcon>
          <TrayIcon $w={20}>
            <svg width="20" height="20" viewBox="0 0 20 20" fill="none" stroke="#fff" strokeWidth="1.100"><path d="M1 7h3l5-4v14l-5-4H1zM12 7c1 2 1 4 0 6M15 5c2 3 2 7 0 10" /></svg>
          </TrayIcon>
          <Clock>
            <span>ENG</span><span>21:07</span>
            <span>IN</span><span>08-08-2020</span>
          </Clock>
          <Notify>
            <svg width="20" height="22" viewBox="0 0 20 22" fill="none" stroke="#fff" strokeWidth="1.200"><path d="M1 1h18v16h-6l-3 3-3-3H1z" /></svg>
          </Notify>
        </Tray>
      </Taskbar>
      <Tooltip>Firefox (2)</Tooltip>
    </Page>
  );
}
